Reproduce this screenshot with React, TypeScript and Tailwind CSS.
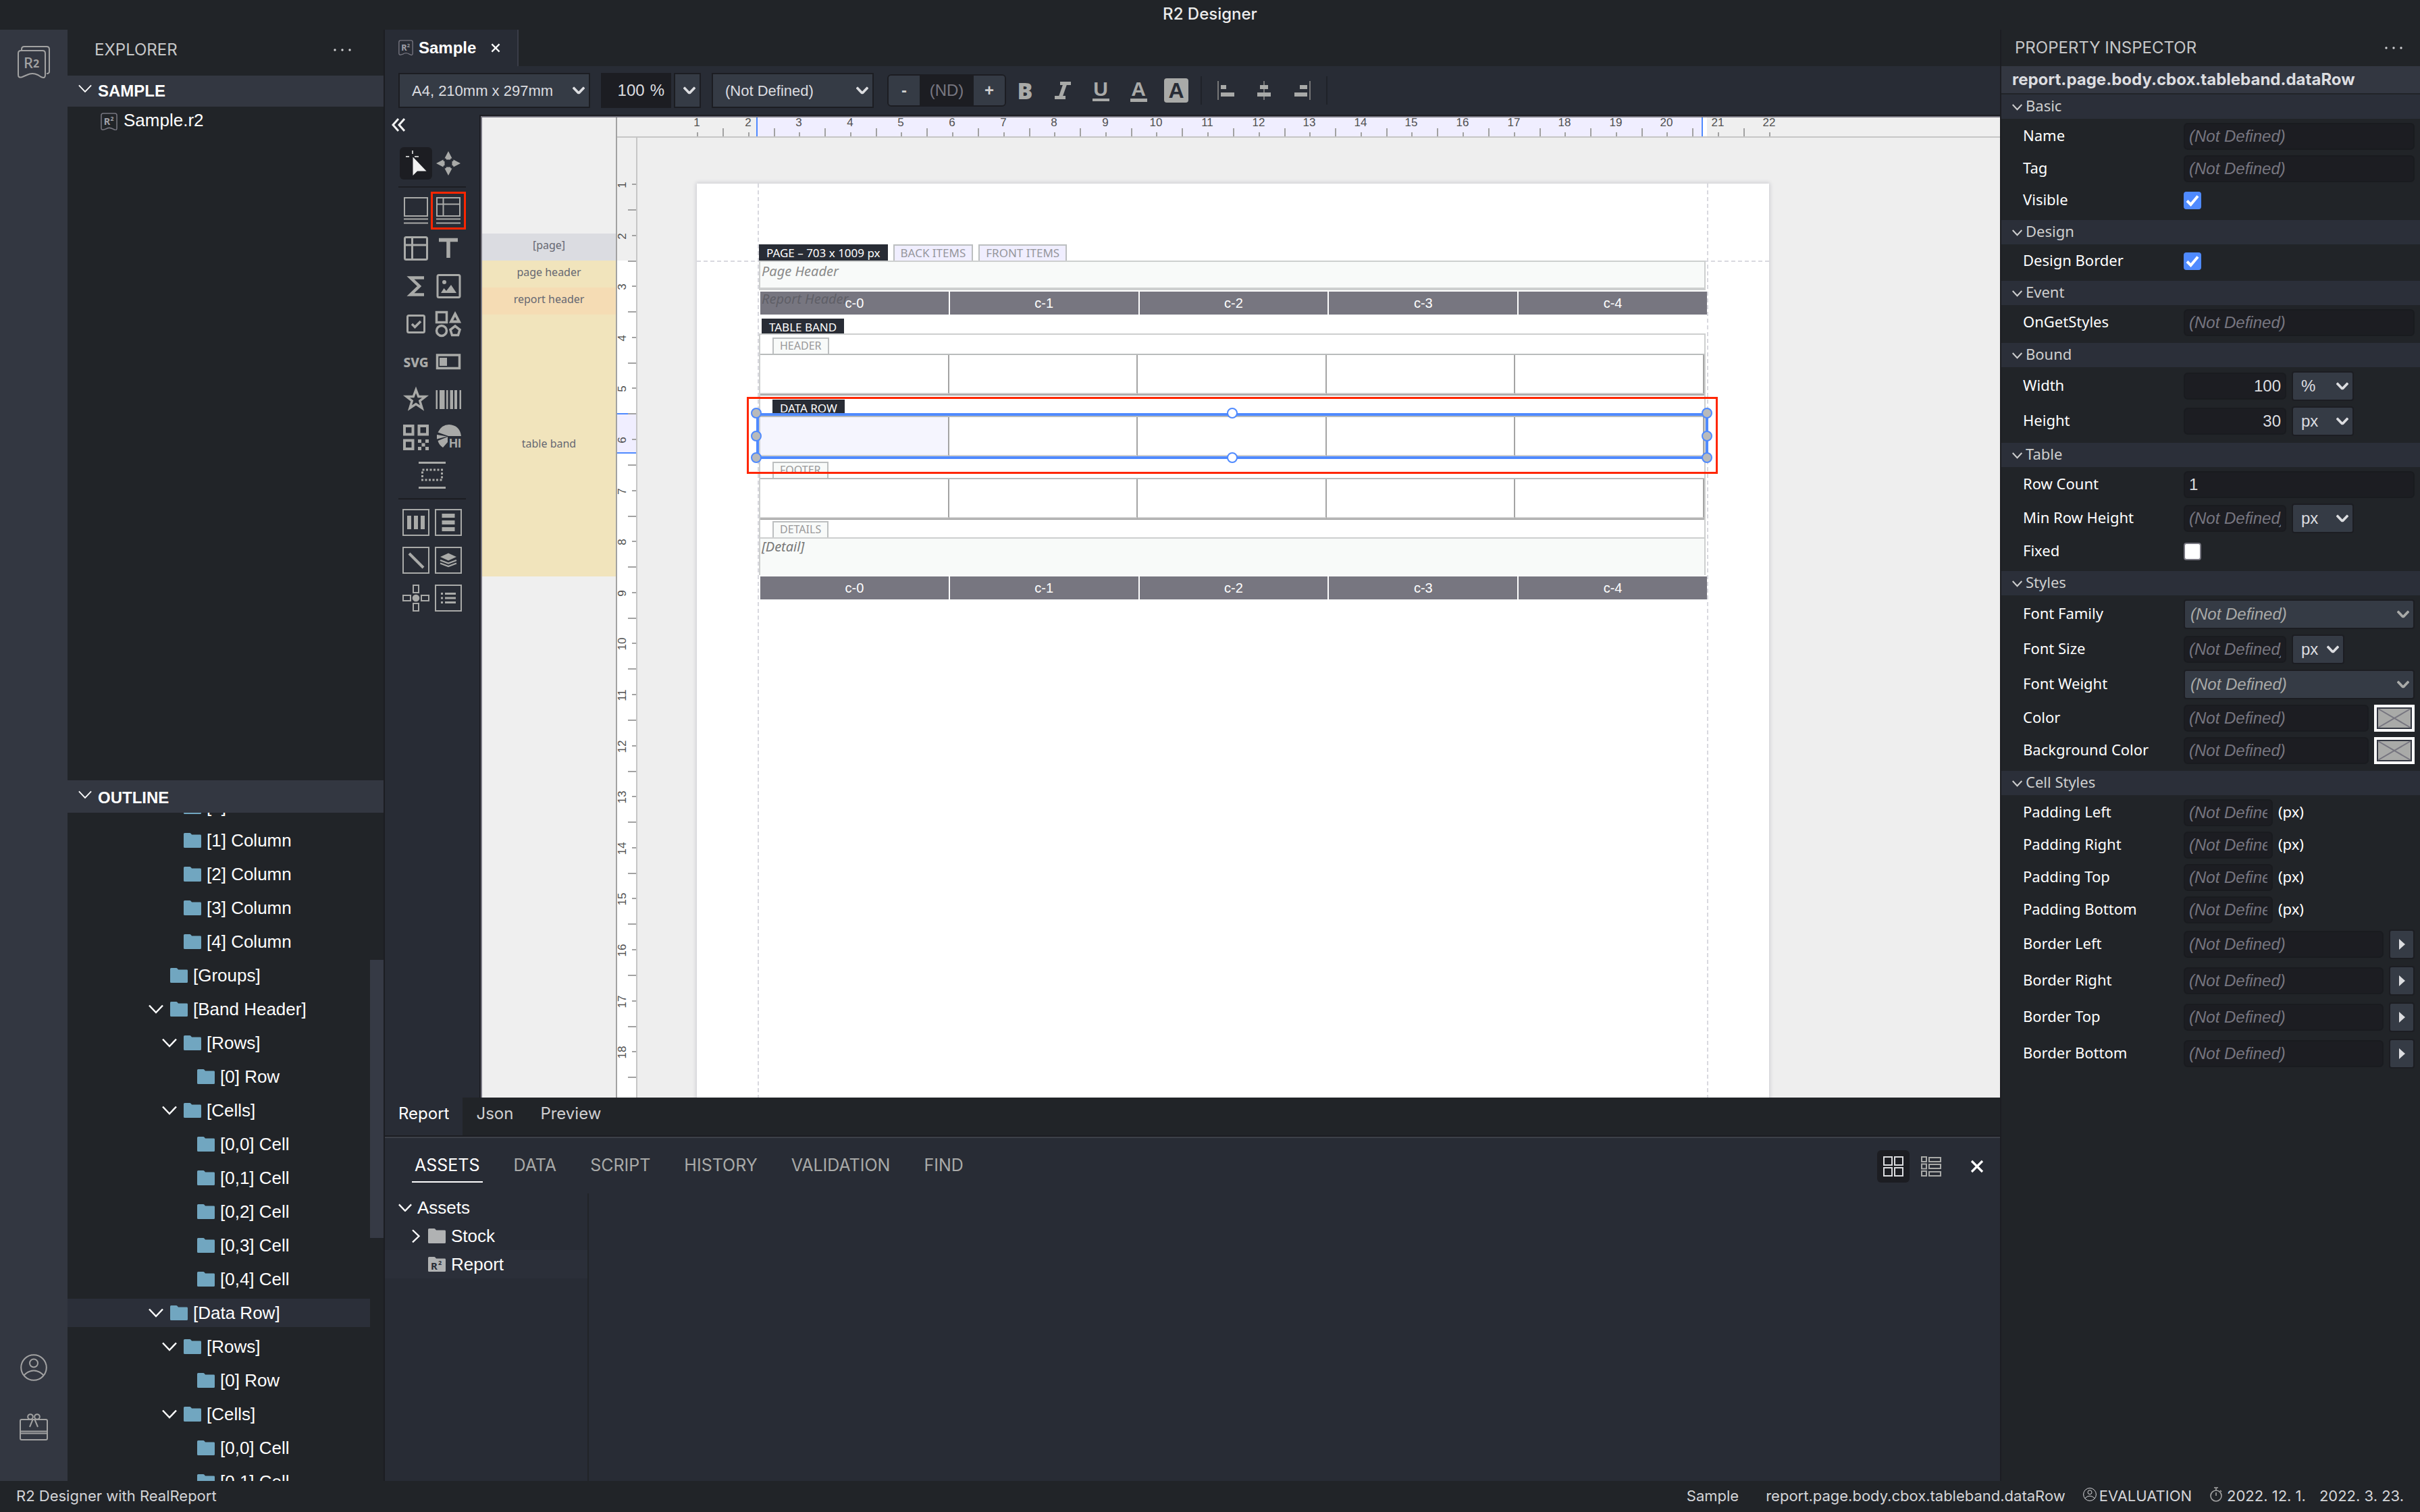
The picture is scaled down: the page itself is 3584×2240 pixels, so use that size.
import { useState, type ReactNode } from "react";

const ND = "(Not Defined)";

type TreeItem = { label: string; level: number; open?: boolean; selected?: boolean };

const outline: TreeItem[] = [
  { label: "[0] Column", level: 2 },
  { label: "[1] Column", level: 2 },
  { label: "[2] Column", level: 2 },
  { label: "[3] Column", level: 2 },
  { label: "[4] Column", level: 2 },
  { label: "[Groups]", level: 1 },
  { label: "[Band Header]", level: 1, open: true },
  { label: "[Rows]", level: 2, open: true },
  { label: "[0] Row", level: 3 },
  { label: "[Cells]", level: 2, open: true },
  { label: "[0,0] Cell", level: 3 },
  { label: "[0,1] Cell", level: 3 },
  { label: "[0,2] Cell", level: 3 },
  { label: "[0,3] Cell", level: 3 },
  { label: "[0,4] Cell", level: 3 },
  { label: "[Data Row]", level: 1, open: true, selected: true },
  { label: "[Rows]", level: 2, open: true },
  { label: "[0] Row", level: 3 },
  { label: "[Cells]", level: 2, open: true },
  { label: "[0,0] Cell", level: 3 },
  { label: "[0,1] Cell", level: 3 },
];

const indents: Record<number, string> = {
  1: "pl-[120px]",
  2: "pl-[140px]",
  3: "pl-[160px]",
};

const columns = ["c-0", "c-1", "c-2", "c-3", "c-4"];

/* ---------- icons ---------- */

const Chevron = ({ className = "", thick = 2 }: { className?: string; thick?: number }) => (
  <svg viewBox="0 0 22 14" className={className} fill="none" stroke="currentColor" strokeWidth={thick} aria-hidden>
    <path d="M1 1.5 11 12 21 1.5" />
  </svg>
);

const Folder = ({ className = "" }: { className?: string }) => (
  <svg viewBox="0 0 26 22" className={className} fill="currentColor" aria-hidden>
    <path d="M0 1.5Q0 0 1.5 0H9Q10 0 10.8 1L12 2.6H24.5Q26 2.6 26 4V20.5Q26 22 24.5 22H1.5Q0 22 0 20.5Z" />
  </svg>
);

const ReportFile = ({ className = "" }: { className?: string }) => (
  <svg viewBox="0 0 26 28" className={className} fill="none" stroke="#777680" strokeWidth="1.6" aria-hidden>
    <path d="M1 4Q1 1 4 1H22Q25 1 25 4V24Q25 27 22 26.500L19 25Q13 21.500 8 25Q1 28 1 24Z" />
    <text x="5" y="19" fill="#a0a0a8" stroke="none" fontSize="15" fontWeight="700" fontFamily="Noto Sans">R</text>
    <text x="15" y="13" fill="#a0a0a8" stroke="none" fontSize="9" fontWeight="700" fontFamily="Noto Sans">2</text>
  </svg>
);

const Dots = () => (
  <svg viewBox="0 0 26 4" className="h-1 w-[26px]" fill="#cfd0d2" aria-hidden>
    <circle cx="2" cy="2" r="1.7" />
    <circle cx="13" cy="2" r="1.7" />
    <circle cx="24" cy="2" r="1.7" />
  </svg>
);

const Cross = ({ className = "" }: { className?: string }) => (
  <svg viewBox="0 0 20 20" className={className} fill="none" stroke="currentColor" strokeWidth="3.2" aria-hidden>
    <path d="M2 2 18 18M18 2 2 18" />
  </svg>
);

const UserIcon = ({ className = "" }: { className?: string }) => (
  <svg viewBox="0 0 40 40" className={className} fill="none" stroke="currentColor" strokeWidth="2" aria-hidden>
    <circle cx="20" cy="20" r="18.800" />
    <circle cx="20" cy="13.500" r="6" />
    <path d="M5.500 31.500Q12 24.500 20 24.500T34.500 31.500" />
  </svg>
);

/* ---------- toolbox ---------- */

const tools: Record<string, ReactNode> = {
  Select: (
    <g>
      <path d="M-4.500-9.500V18L2 11.500H15.500Z" fill="#f2f2f2" stroke="none" />
      <path d="M-15-10H-10M-2-10H4M-5-19V-14" stroke="#c0c0c0" strokeWidth="2" />
    </g>
  ),
  Move: (
    <g fill="#a9aaa8" stroke="none">
      {[0, 90, 180, 270].map((a) => (
        <path key={a} transform={`rotate(${a})`} d="M0-18 5.500-7.500Q3-8 3-5.500H-3Q-3-8-5.500-7.500Z" />
      ))}
    </g>
  ),
  Band: <path d="M-17-19H17V8H-17ZM-18 12.500H18M-18 18.500H18" />,
  "Table Band": <path d="M-17-19H17V8H-17ZM-17-9.500H17M-7.500-19V8M-18 12.500H18M-18 18.500H18" />,
  Table: (
    <g strokeWidth="3">
      <rect x="-16.500" y="-16.500" width="33" height="33" rx="2" />
      <path d="M-16-5H16M-5.500-16V16" />
    </g>
  ),
  Text: <path d="M-14-12.500H14M0-12V14" strokeWidth="5.500" />,
  Summary: <path d="M12-12.500H-8L5 0-8 12.500H12" strokeWidth="4.500" />,
  Image: (
    <g>
      <rect x="-16" y="-16.500" width="33" height="33" rx="2" strokeWidth="3" />
      <circle cx="-6" cy="-6" r="3" fill="#a9aaa8" stroke="none" />
      <path d="M-11 10-6.500 3-3 7 4-2 12 10Z" fill="#a9aaa8" stroke="none" />
    </g>
  ),
  "Check Box": (
    <g strokeWidth="3">
      <rect x="-12.500" y="-12.500" width="25" height="25" rx="2" />
      <path d="M-6 0-1.500 4.500 7-4" strokeWidth="3.500" />
    </g>
  ),
  Shape: (
    <g strokeWidth="3.500">
      <rect x="-17.500" y="-17.500" width="15" height="15" />
      <path d="M10-15 16-3.500H4Z" strokeWidth="3.800" />
      <circle cx="-10" cy="10" r="7.500" />
      <path d="M10 3 17 8.500 14.500 16.500H5.500L3 8.500Z" />
    </g>
  ),
  SVG: (
    <text x="0" y="8" textAnchor="middle" fill="#a9aaa8" stroke="none" fontSize="19" fontWeight="800" fontFamily="Noto Sans">
      SVG
    </text>
  ),
  "Html View": (
    <g>
      <rect x="-16.500" y="-10" width="33" height="19.500" strokeWidth="3.500" />
      <rect x="-13" y="-6" width="11" height="12" fill="#a9aaa8" stroke="none" />
    </g>
  ),
  Star: <path d="M0-14.500 3.800-4.500H14L5.800 2 9 12.500 0 6.500-9 12.500-5.800 2-14-4.500H-3.800Z" strokeWidth="3.500" />,
  Barcode: (
    <path
      d="M-18.500-14H-16V14H-18.500ZM-13-14H-5.500V14H-13ZM-3-14H-.500V14H-3ZM2.500-14H7V14H2.500ZM9-14H13V14H9ZM16.500-14H19V14H16.500Z"
      fill="#a9aaa8"
      stroke="none"
    />
  ),
  "QR Code": (
    <g>
      <path d="M-17-17H-4.500V-4.500H-17ZM4.500-17H17V-4.500H4.500ZM-17 4.500H-4.500V17H-17Z" strokeWidth="4" />
      <path
        d="M3 3H8V8H3ZM14 3H19V8H14ZM8.500 8.500H13.500V13.500H8.500ZM3 14H8V19H3ZM14 14H19V19H14Z"
        fill="#a9aaa8"
        stroke="none"
      />
    </g>
  ),
  Chart: (
    <g fill="#a9aaa8" stroke="none">
      <path d="M-15.500-7.500Q-10-19 1-19 17-18 19-2H0ZM-17-4-2-1.500-17 2.500ZM-15.500 5-1-1V7L-8 15Q-14 11-15.500 5Z" />
      <text x="1" y="14.500" fontSize="18" fontWeight="700" fontFamily="Liberation Sans">HI</text>
    </g>
  ),
  Spacer: (
    <g strokeWidth="3">
      <path d="M-20-18.500H20M-20 18.500H20" />
      <rect x="-14.500" y="-8" width="29" height="15" strokeDasharray="3 2.500" />
    </g>
  ),
  "Column Box": (
    <g>
      <rect x="-19" y="-19" width="38" height="38" />
      <path d="M-10-10V10M0-10V10M10-10V10" strokeWidth="6" />
    </g>
  ),
  "Row Box": (
    <g>
      <rect x="-19" y="-19" width="38" height="38" />
      <path d="M-9.500-10H9.500M-9.500 0H9.500M-9.500 10H9.500" strokeWidth="6" />
    </g>
  ),
  "Bound Box": (
    <g>
      <rect x="-19" y="-19" width="38" height="38" />
      <path d="M-10-10 11 11" strokeWidth="4" />
    </g>
  ),
  "Stack Box": (
    <g>
      <rect x="-19" y="-19" width="38" height="38" />
      <path d="M0-10.500 12-5 0 .500-12-5Z" fill="#a9aaa8" stroke="none" />
      <path d="M-12 0 0 4.500 12 0M-12 4.500 0 9 12 4.500" strokeWidth="2.400" />
    </g>
  ),
  Layout: (
    <g>
      <path d="M-4-19H4V-8H-4ZM-4 8H4V19H-4ZM-19-4H-8V4H-19ZM8-4H19V4H8Z" />
      <circle r="5.300" fill="#a9aaa8" stroke="none" />
    </g>
  ),
  List: (
    <g>
      <rect x="-19" y="-19" width="38" height="38" />
      <path d="M-11-6.500H-8M-5-6.500H11M-11 0H-8M-5 0H11M-11 6.500H-8M-5 6.500H11" strokeWidth="3" />
    </g>
  ),
};

const toolGroups: string[][] = [
  ["Select", "Move"],
  ["Band", "Table Band", "Table", "Text", "Summary", "Image", "Check Box", "Shape", "SVG", "Html View", "Star", "Barcode", "QR Code", "Chart", "Spacer"],
  ["Column Box", "Row Box", "Bound Box", "Stack Box", "Layout", "List"],
];

const Tool = ({ name, active, onClick }: { name: string; active: boolean; onClick: () => void }) => (
  <button
    aria-label={name}
    onClick={onClick}
    className={`relative flex h-12 items-center justify-center rounded-md ${active ? "bg-[#1c1d22]" : ""} ${
      name === "Spacer" ? "col-span-2" : ""
    }`}
  >
    <svg viewBox="-20 -20 40 40" className="size-10" fill="none" stroke="#a9aaa8" strokeWidth="2">
      {tools[name]}
    </svg>
    {name === "Table Band" && <span className="absolute -inset-x-[2px] -inset-y-1 border-[3px] border-[#ff2600]" />}
  </button>
);

const Toolbox = () => {
  const [tool, setTool] = useState("Select");

  return (
    <div className="w-[140px] shrink-0 px-5">
      <button aria-label="Collapse toolbox" className="-ml-2.5 mt-[5px] block text-[#f2f2f2]">
        <svg viewBox="0 0 20 20" className="size-5" fill="none" stroke="currentColor" strokeWidth="3">
          <path d="M10 1 2 10 10 19M19 1 11 10 19 19" />
        </svg>
      </button>
      <div className="mt-[23px]">
        {toolGroups.map((group, i) => (
          <div key={i}>
            {i > 0 && <div className="my-[10px] h-[2px] bg-[#1c1d22]" />}
            <div className="mx-[2px] grid grid-cols-2 gap-y-2">
              {group.map((name) => (
                <Tool key={name} name={name} active={tool === name} onClick={() => setTool(name)} />
              ))}
            </div>
          </div>
        ))}
      </div>
    </div>
  );
};

/* ---------- form parts ---------- */

const Select = ({
  id,
  label,
  value,
  className = "",
  selectClass = "",
  chevronClass = "text-[#dcdde0]",
}: {
  id?: string;
  label?: string;
  value: string;
  className?: string;
  selectClass?: string;
  chevronClass?: string;
}) => (
  <div className={`relative ${className}`}>
    <select
      id={id}
      aria-label={label}
      className={`h-full w-full appearance-none border-2 border-[#1c1d22] bg-[#353b45] text-[#dcdde0] outline-none ${selectClass}`}
    >
      <option>{value}</option>
    </select>
    <Chevron thick={4.5} className={`pointer-events-none absolute right-2 top-1/2 w-[18px] -translate-y-1/2 ${chevronClass}`} />
  </div>
);

const Toolbar = () => (
  <div className="flex h-[72px] shrink-0 items-center bg-[#282c35] pl-5 text-[22px]">
    <Select label="Paper size" value="A4, 210mm x 297mm" className="h-[52px] w-[284px]" selectClass="pl-[18px]" />
    <div className="ml-4 flex h-[52px] w-[104px] items-center justify-end bg-[#1c1d22] pr-[10px] text-[24px] text-[#dcdde0]">
      <input aria-label="Zoom" defaultValue="100" className="mr-2 w-[56px] bg-transparent text-right outline-none" />%
    </div>
    <Select label="Zoom level" value="" className="ml-1 h-[52px] w-10" />
    <Select label="Font" value={ND} className="ml-4 h-[52px] w-[240px]" selectClass="pl-[18px]" />
    <div className="ml-5 flex h-12 w-[176px] overflow-hidden rounded-md border-2 border-[#1c1d22] text-[24px]">
      <button className="w-[46px] bg-[#353b45] font-bold text-[#cfcfcf]">-</button>
      <input
        aria-label="Font size"
        placeholder="(ND)"
        className="w-20 bg-[#1c1d22] text-center outline-none placeholder:text-[#777680]"
      />
      <button className="w-[46px] bg-[#353b45] font-bold text-[#cfcfcf]">+</button>
    </div>
    <div className="flex h-[42px] items-center border-r-2 border-[#1f2229] pr-2 text-[32px] font-bold leading-none text-[#a9aaa8]">
      <button className="w-14 font-[Noto_Sans] text-[34px] font-black">B</button>
      <button aria-label="Italic" className="flex w-14 justify-center">
        <svg viewBox="0 0 24 26" className="h-[26px] w-6" fill="none" stroke="currentColor">
          <path d="M8 2.500H24M0 23.500H16" strokeWidth="5" />
          <path d="M15.500 3 8.500 23" strokeWidth="5.500" />
        </svg>
      </button>
      <button className="flex w-14 justify-center">
        <span className="w-[25px] border-b-4 border-current text-[30px] leading-[28px]">U</span>
      </button>
      <button className="flex w-14 justify-center">
        <span className="w-[25px] border-b-[5px] border-current text-[30px] leading-[28px]">A</span>
      </button>
      <button className="flex w-14 justify-center">
        <span className="size-9 rounded bg-[#a9aaa8] leading-9 text-[#282c35]">A</span>
      </button>
    </div>
    <div className="flex h-[42px] items-center border-r-2 border-[#1f2229] px-2">
      {[
        { name: "Align left", d: "M-12-14V14", boxes: "M-8-8H0V-2H-8ZM-8 3H12V9H-8Z" },
        { name: "Align center", d: "M0-14V14", boxes: "M-6-8H6V-2H-6ZM-10 3H10V9H-10Z" },
        { name: "Align right", d: "M12-14V14", boxes: "M-3-8H8V-2H-3ZM-11 3H8V9H-11Z" },
      ].map((a) => (
        <button key={a.name} aria-label={a.name} className="flex w-14 justify-center">
          <svg viewBox="-14 -14 28 28" className="size-7" fill="#a9aaa8" stroke="#777">
            <path d={a.d} strokeWidth="2" />
            <path d={a.boxes} stroke="none" />
          </svg>
        </button>
      ))}
    </div>
  </div>
);

/* ---------- rulers ---------- */

const STEP = 75.6; // one centimetre at double density

const marks = (count: number) => Array.from({ length: count }, (_, i) => i + 1);

const HorizontalRuler = () => (
  <svg className="block h-[30px] w-full bg-[#efefef]" fontFamily="Liberation Sans" fontSize="17" fill="#4f4f4f">
    <rect x="206" width="1402" height="30" fill="#f0eeff" />
    <rect x="1608" width="6" height="30" fill="#fff" />
    <path d="M207 0V28M1607 0V28" stroke="#4f8aff" strokeWidth="2" />
    <rect y="28" width="100%" height="2" fill="#c6c6c6" />
    {marks(22).map((n) => {
      const x = Math.round(119 + (n - 1) * STEP);
      return (
        <g key={n}>
          <text x={x - 1} y="13" textAnchor="middle">{n}</text>
          <rect x={x - 1} y="22" width="2" height="6" fill="#a2a2a2" />
          {n < 22 && <rect x={x + 37} y="16" width="2" height="12" fill="#a2a2a2" />}
        </g>
      );
    })}
  </svg>
);

const VerticalRuler = () => (
  <svg className="block h-full w-[30px] shrink-0 bg-white" fontFamily="Liberation Sans" fontSize="17" fill="#4f4f4f">
    <rect width="30" height="182" fill="#efefef" />
    <rect y="408" width="30" height="60" fill="#f0eeff" />
    <path d="M0 409H28M0 467H28" stroke="#4f8aff" strokeWidth="2" />
    <rect x="28" width="2" height="100%" fill="#c6c6c6" />
    {marks(19).map((n) => {
      const y = Math.round(69 + (n - 1) * STEP);
      return (
        <g key={n}>
          <text transform={`translate(13 ${y + 1}) rotate(-90)`} textAnchor="middle">{n}</text>
          <rect x="22" y={y - 1} width="6" height="2" fill="#a2a2a2" />
          <rect x="16" y={y + 37} width="12" height="2" fill="#a2a2a2" />
        </g>
      );
    })}
  </svg>
);

/* ---------- report page ---------- */

const Tag = ({ children, tone = "plain" }: { children: ReactNode; tone?: "plain" | "dark" | "violet" }) => (
  <span
    className={`flex h-6 w-fit items-center border-2 border-b-0 px-[9px] pb-[2px] leading-none ${
      tone === "dark"
        ? "border-[#282c35] bg-[#282c35] text-[17px] text-white"
        : tone === "violet"
          ? "border-[#bcbfc0] bg-[#f0eeff] text-[17px] text-[#96969c]"
          : "border-[#bcbfc0] bg-[#f8faf9] text-[16px] text-[#999]"
    }`}
  >
    {children}
  </span>
);

const ColumnBar = ({ ghost }: { ghost?: string }) => (
  <div className="relative ml-[2px] flex h-[34px] gap-[2px] font-[Liberation_Sans] text-[20px] text-white">
    {columns.map((c) => (
      <div key={c} className="flex flex-1 items-center justify-center bg-[#777680]">{c}</div>
    ))}
    {ghost && (
      <span className="absolute left-[2px] -top-[4px] font-[Noto_Sans] italic text-[#5f5f67]">{ghost}</span>
    )}
  </div>
);

const BandRow = ({ selected = false }: { selected?: boolean }) => (
  <div className="relative flex h-[62px] border-y-2 border-t-[#b9bcbc] border-b-[#a4a4a4]">
    {columns.map((c, i) => (
      <div
        key={c}
        className={`flex-1 border-b-2 border-r-2 border-b-[#d0d0d0] border-r-[#a4a4a4] ${selected && i === 0 ? "bg-[#f5f5fe]" : "bg-white"}`}
      />
    ))}
    {selected && <Selection />}
  </div>
);

const handle = "absolute size-4 rounded-full border-2 border-[#4f8aff]";

/* Resize frame of the selected row and the callout round it */
const Selection = () => (
  <>
    <div className="absolute -inset-x-[6px] -top-[6px] -bottom-1 border-4 border-[#4f8aff]">
      <span className={`${handle} -left-3 -top-3 bg-[#b8babb]`} />
      <span className={`${handle} -left-3 top-1/2 -translate-y-1/2 bg-[#b8babb]`} />
      <span className={`${handle} -left-3 -bottom-[10px] bg-[#b8babb]`} />
      <span className={`${handle} -top-3 left-1/2 -translate-x-1/2 bg-white`} />
      <span className={`${handle} -bottom-[10px] left-1/2 -translate-x-1/2 bg-white`} />
      <span className={`${handle} -right-[10px] -top-3 bg-[#b8babb]`} />
      <span className={`${handle} -right-[10px] top-1/2 -translate-y-1/2 bg-[#b8babb]`} />
      <span className={`${handle} -right-[10px] -bottom-[10px] bg-[#b8babb]`} />
    </div>
    <div className="absolute -inset-x-[20px] -top-[30px] -bottom-[26px] z-10 border-[3px] border-[#ff2600]" />
  </>
);

const ReportPage = () => (
  <div className="relative h-[2246px] w-[1588px] bg-white px-[92px] pt-[90px] font-[Noto_Sans] shadow-[0_0_6px_1px_rgba(60,60,90,0.2)]">
    <div className="absolute inset-y-0 left-[90px] right-[90px] border-x-2 border-dashed border-[#d9d9df]" />
    <div className="absolute inset-x-0 top-[114px] border-t-2 border-dashed border-[#d9d9df]" />

    <div className="relative">
      <div className="flex gap-2">
        <Tag tone="dark">PAGE – 703 x 1009 px</Tag>
        <Tag tone="violet">BACK ITEMS</Tag>
        <Tag tone="violet">FRONT ITEMS</Tag>
      </div>
      <div className="mr-[2px] h-11 border-2 border-b-4 border-[#cdcfcf] bg-[#f8faf9] pl-[2px] text-[20px] italic leading-7 text-[#8a8a8a]">
        Page Header
      </div>
      <div className="mt-[2px]">
        <ColumnBar ghost="Report Header" />
      </div>

      <div className="ml-1 mt-1.5">
        <Tag tone="dark">TABLE BAND</Tag>
      </div>
      <div className="-mt-[2px] mr-[2px] border-2 border-b-0 border-[#cdcfcf]">
        <div className="pl-[18px] pt-1"><Tag>HEADER</Tag></div>
        <BandRow />
        <div className="pl-[18px] pt-1.5"><Tag tone="dark">DATA ROW</Tag></div>
        <BandRow selected />
        <div className="pl-[18px] pt-1.5"><Tag>FOOTER</Tag></div>
        <BandRow />
        <div className="pl-[18px] pt-[2px]"><Tag>DETAILS</Tag></div>
        <div className="h-14 border-t-2 border-[#cdcfcf] bg-[#f8faf9] pl-[2px] text-[20px] italic leading-6 text-[#777]">
          [Detail]
        </div>
      </div>
      <div className="mt-[2px]">
        <ColumnBar />
      </div>
    </div>
  </div>
);

const Designer = () => (
  <div className="flex min-w-0 flex-1 border-l-2 border-t-2 border-[#1c1d22]">
    <div className="flex min-w-0 flex-1 border-l-2 border-t-2 border-[#777680]">
      <div className="w-[200px] shrink-0 border-r-2 border-[#a2a2a2] bg-[#efefef] pt-[172px] text-center font-[Noto_Sans] text-[16px] text-[#666872]">
        <div className="h-10 bg-[#dbdce1] leading-[34px]">[page]</div>
        <div className="h-10 bg-[#f1e4bc] leading-[34px]">page header</div>
        <div className="h-10 bg-[#f5dcb4] leading-[34px]">report header</div>
        <div className="h-[388px] bg-[#f1e4bc] leading-[382px]">table band</div>
      </div>
      <div className="flex min-w-0 flex-1 flex-col">
        <HorizontalRuler />
        <div className="flex min-h-0 flex-1">
          <VerticalRuler />
          <div className="min-w-0 flex-1 overflow-hidden bg-[#eee] pl-[88px] pt-[68px]">
            <ReportPage />
          </div>
        </div>
      </div>
    </div>
  </div>
);

/* ---------- side panels ---------- */

const ActivityBar = () => (
  <nav className="flex w-[100px] shrink-0 flex-col items-center bg-[#333741] text-[#a2a2a2]">
    <button aria-label="Reports" className="mt-6">
      <svg viewBox="0 0 48 48" className="size-12" fill="none" stroke="currentColor" strokeWidth="2">
        <path d="M6 7V5Q6 1 10 1H43Q47 1 47 5V38Q47 41 43 41" />
        <path d="M1 11Q1 7 5 7H37Q41 7 41 11V43Q41 49 35 46L30 43Q22 39 14 43L7 46Q1 48 1 43Z" />
        <text x="9" y="33" fill="currentColor" stroke="none" fontSize="22" fontFamily="Noto Sans" fontWeight="500">R</text>
        <text x="23" y="32" fill="currentColor" stroke="none" fontSize="16" fontFamily="Noto Sans" fontWeight="700">2</text>
      </svg>
    </button>
    <button aria-label="Account" className="mt-auto">
      <UserIcon className="size-10" />
    </button>
    <button aria-label="Gift" className="mb-[60px] mt-12">
      <svg viewBox="0 0 42 40" className="h-10 w-[42px]" fill="none" stroke="currentColor" strokeWidth="2">
        <rect x="1" y="9" width="40" height="30" rx="2" />
        <path d="M1 26.500H41M1 29.500H41M20 8 15 20M22 8 27 20" />
        <circle cx="16" cy="5" r="3.800" />
        <circle cx="26" cy="5" r="3.800" />
      </svg>
    </button>
  </nav>
);

const PanelHeader = ({ title, className }: { title: string; className: string }) => (
  <button className={`flex w-full shrink-0 items-center bg-[#333741] pl-4 text-[24px] font-bold text-white ${className}`}>
    <Chevron className="mb-2 mr-[9px] w-5" />
    {title}
  </button>
);

const Sidebar = () => (
  <aside className="flex w-[470px] shrink-0 flex-col border-r-2 border-[#1c1d22] text-white">
    <div className="flex h-[68px] shrink-0 items-center justify-between pb-2 pl-10 pr-12 font-[Inter] text-[24px] text-[#c6c7c8]">
      <h2>EXPLORER</h2>
      <button aria-label="Explorer menu"><Dots /></button>
    </div>
    <PanelHeader title="SAMPLE" className="h-[46px]" />
    <div className="h-[998px] shrink-0">
      <a href="#sample" className="flex h-10 items-center pl-[49px] text-[26px]">
        <ReportFile className="mr-[9px] mt-1 w-[25px]" />
        Sample.r2
      </a>
    </div>
    <PanelHeader title="OUTLINE" className="h-12 pt-[3px]" />
    <div className="relative min-h-0 flex-1 overflow-hidden">
      <ul className="-mt-[30px] mr-5 flex flex-col gap-2 text-[26px]">
        {outline.map((item, i) => (
          <li key={i} className={`flex h-[42px] shrink-0 items-center ${indents[item.level]} ${item.selected ? "bg-[#2b2f39]" : ""}`}>
            <span className="mr-2.5 w-[22px]">{item.open && <Chevron className="w-[22px]" thick={2.5} />}</span>
            <Folder className="mr-2 w-[26px] shrink-0 text-[#71a6c0]" />
            {item.label}
          </li>
        ))}
      </ul>
      <div className="absolute right-0 top-[218px] h-[412px] w-5 bg-[#363a45]" />
    </div>
  </aside>
);

const Bottom = () => {
  const [view, setView] = useState("ASSETS");

  return (
    <section className="flex h-[510px] shrink-0 flex-col border-t-2 border-[#3d4149] bg-[#282c35]">
      <div className="flex h-[82px] shrink-0 items-center pl-10 pr-6 pt-[2px] font-[Inter] text-[25px] text-[#a9aaa8]">
        <div className="flex gap-[42px]">
          {["ASSETS", "DATA", "SCRIPT", "HISTORY", "VALIDATION", "FIND"].map((name) => (
            <button
              key={name}
              onClick={() => setView(name)}
              className={`h-[48px] border-b-2 px-1 ${view === name ? "border-white text-white" : "border-transparent"}`}
            >
              {name}
            </button>
          ))}
        </div>
        <button aria-label="Grid view" className="ml-auto flex size-12 items-center justify-center rounded-md bg-[#1c1d22]">
          <svg viewBox="0 0 30 30" className="size-[30px]" fill="none" stroke="#dcdde0" strokeWidth="2">
            <path d="M1 1H13V13H1ZM17 1H29V13H17ZM1 17H13V29H1ZM17 17H29V29H17Z" />
          </svg>
        </button>
        <button aria-label="List view" className="ml-2 flex size-12 items-center justify-center">
          <svg viewBox="0 0 30 30" className="size-[30px]" fill="none" stroke="#a9aaa8" strokeWidth="2">
            <path d="M1 1H8V8H1ZM12 2H29V8H12ZM1 11.500H8V18.500H1ZM12 12H29V18H12ZM1 22H8V29H1ZM12 23H29V29H12Z" />
          </svg>
        </button>
        <button aria-label="Close panel" className="ml-[34px] text-white">
          <Cross className="size-5" />
        </button>
      </div>
      <ul className="w-[302px] flex-1 border-r-2 border-[#212428] text-[26px] text-white">
        <li className="flex h-[42px] items-center pl-5">
          <Chevron className="mr-2 w-5" thick={2.5} />
          Assets
        </li>
        <li className="flex h-[42px] items-center pl-9">
          <Chevron className="mr-2 w-5 -rotate-90" thick={2.5} />
          <Folder className="mr-2 w-[26px] text-[#b0b2b3]" />
          Stock
        </li>
        <li className="flex h-[42px] items-center bg-[#2b2f39] pl-16">
          <span className="relative mr-2">
            <Folder className="w-[26px] text-[#b0b2b3]" />
            <span className="absolute left-1 top-[3px] font-[Noto_Sans] text-[15px] font-bold leading-5 text-[#282c35]">R</span>
            <span className="absolute left-[15px] top-[3px] font-[Noto_Sans] text-[9px] font-bold leading-3 text-[#282c35]">2</span>
          </span>
          Report
        </li>
      </ul>
    </section>
  );
};

const Editor = () => (
  <main className="flex min-w-0 flex-1 flex-col">
    <div className="flex h-[54px] shrink-0">
      <div className="flex w-[198px] items-center border-r-2 border-[#3a3d48] bg-[#282c35] pl-5 text-[24px] font-bold text-white">
        <ReportFile className="mr-2 w-[22px]" />
        Sample
        <button aria-label="Close tab" className="ml-[22px]"><Cross className="size-[14px]" /></button>
      </div>
    </div>
    <Toolbar />
    <div className="flex min-h-0 flex-1 bg-[#282c35]">
      <Toolbox />
      <Designer />
    </div>
    <div className="flex h-[58px] shrink-0 border-b-2 border-[#1c1d22] font-[Inter] text-[24px] text-[#cfcfd1]">
      <button className="bg-[#282c35] px-5 pb-2 text-white">Report</button>
      <button className="px-5 pb-2">Json</button>
      <button className="px-5 pb-2">Preview</button>
    </div>
    <Bottom />
  </main>
);

/* ---------- property inspector ---------- */

type Kind = "text" | "check" | "unit" | "select" | "color" | "pad" | "border";
type Prop = { label: string; kind: Kind; value?: string; unit?: string; checked?: boolean; small?: boolean };

const sections: { title: string; props: Prop[] }[] = [
  {
    title: "Basic",
    props: [
      { label: "Name", kind: "text" },
      { label: "Tag", kind: "text" },
      { label: "Visible", kind: "check", checked: true },
    ],
  },
  { title: "Design", props: [{ label: "Design Border", kind: "check", checked: true }] },
  { title: "Event", props: [{ label: "OnGetStyles", kind: "text" }] },
  {
    title: "Bound",
    props: [
      { label: "Width", kind: "unit", value: "100", unit: "%" },
      { label: "Height", kind: "unit", value: "30", unit: "px" },
    ],
  },
  {
    title: "Table",
    props: [
      { label: "Row Count", kind: "text", value: "1" },
      { label: "Min Row Height", kind: "unit", unit: "px" },
      { label: "Fixed", kind: "check" },
    ],
  },
  {
    title: "Styles",
    props: [
      { label: "Font Family", kind: "select" },
      { label: "Font Size", kind: "unit", unit: "px", small: true },
      { label: "Font Weight", kind: "select" },
      { label: "Color", kind: "color" },
      { label: "Background Color", kind: "color" },
    ],
  },
  {
    title: "Cell Styles",
    props: [
      { label: "Padding Left", kind: "pad" },
      { label: "Padding Right", kind: "pad" },
      { label: "Padding Top", kind: "pad" },
      { label: "Padding Bottom", kind: "pad" },
      { label: "Border Left", kind: "border" },
      { label: "Border Right", kind: "border" },
      { label: "Border Top", kind: "border" },
      { label: "Border Bottom", kind: "border" },
    ],
  },
];

const rowHeights: Record<Kind, string> = {
  text: "h-12",
  color: "h-12",
  pad: "h-12",
  check: "h-[46px]",
  unit: "h-[52px]",
  select: "h-[52px]",
  border: "h-[54px]",
};

const field =
  "h-10 min-w-0 rounded-md border-2 border-[#191b1f] bg-[#1c1d22] px-1.5 font-[Liberation_Sans] text-[24px] text-[#dcdde0] outline-none placeholder:italic placeholder:text-[#777680]";

const PropEditor = ({ id, prop }: { id: string; prop: Prop }) => {
  switch (prop.kind) {
    case "check":
      return (
        <span className="relative flex size-[26px]">
          <input
            id={id}
            type="checkbox"
            defaultChecked={prop.checked}
            className="peer size-[26px] appearance-none rounded border-2 border-[#777680] bg-white checked:border-[#4f8aff] checked:bg-[#4f8aff]"
          />
          <svg viewBox="0 0 26 26" className="pointer-events-none absolute inset-0 hidden peer-checked:block" fill="none" stroke="#fff" strokeWidth="4">
            <path d="M5 13.500 10.500 19 21 6.500" />
          </svg>
        </span>
      );
    case "unit":
      return (
        <>
          <input id={id} defaultValue={prop.value} placeholder={ND} className={`${field} w-[152px] ${prop.value ? "text-right" : ""}`} />
          <Select
            label={`${prop.label} unit`}
            value={prop.unit ?? "px"}
            className={`h-11 font-[Liberation_Sans] text-[24px] ${prop.small ? "w-[78px]" : "w-[92px]"}`}
            selectClass="rounded pl-3"
          />
        </>
      );
    case "select":
      return (
        <Select
          id={id}
          value={ND}
          className="h-11 flex-1 font-[Liberation_Sans] text-[24px] italic"
          selectClass="rounded pl-2 !text-[#a9aaa8]"
          chevronClass="text-[#a9aaa8]"
        />
      );
    case "color":
      return (
        <>
          <input id={id} placeholder={ND} className={`${field} flex-1`} />
          <button aria-label={`Pick ${prop.label}`} className="h-10 w-[60px] bg-white p-1">
            <svg viewBox="0 0 52 32" className="block h-8 w-[52px]" fill="#a9aaa8" stroke="#333741">
              <rect x="1" y="1" width="50" height="30" strokeWidth="2" />
              <path d="M2 2 50 30M50 2 2 30" stroke="#777680" strokeWidth="2" />
            </svg>
          </button>
        </>
      );
    case "pad":
      return (
        <>
          <input id={id} placeholder={ND} className={`${field} w-[132px]`} />
          <span className="pb-1">(px)</span>
        </>
      );
    case "border":
      return (
        <>
          <input id={id} placeholder={ND} className={`${field} flex-1`} />
          <button aria-label={`Edit ${prop.label}`} className="flex h-11 w-[38px] items-center justify-center rounded border-2 border-[#1c1d22] bg-[#353b45]">
            <svg viewBox="0 0 9 16" className="h-4 w-[9px]" fill="#dcdde0">
              <path d="M0 0 9 8 0 16Z" />
            </svg>
          </button>
        </>
      );
    default:
      return <input id={id} defaultValue={prop.value} placeholder={ND} className={`${field} flex-1`} />;
  }
};

const Inspector = () => (
  <aside className="w-[622px] shrink-0 border-l-2 border-[#1c1d22] font-[Noto_Sans] text-[22px] text-white">
    <div className="flex h-[54px] items-center justify-between pl-5 pr-[26px] font-[Inter] text-[24px] text-[#c6c7c8]">
      <h2>PROPERTY INSPECTOR</h2>
      <button aria-label="Inspector menu"><Dots /></button>
    </div>
    <div className="h-10 bg-[#333741] pl-4 font-[Inter] text-[24px] font-bold leading-10 text-[#dcdde0]">
      report.page.body.cbox.tableband.dataRow
    </div>
    <div className="pt-[2px]">
      {sections.map((section) => (
        <section key={section.title}>
          <h3 className="flex h-9 items-center bg-[#2b2f39] pb-1 pl-4 text-[#cfcfcf]">
            <Chevron className="mr-[5px] mt-1.5 w-[15px]" thick={3} />
            {section.title}
          </h3>
          <div className="pb-1.5 pt-[2px]">
            {section.props.map((prop) => {
              const id = prop.label.toLowerCase().replaceAll(" ", "-");
              return (
                <div key={id} className={`flex items-center gap-2 pl-8 pr-2 ${rowHeights[prop.kind]}`}>
                  <label htmlFor={id} className="w-[230px] shrink-0 pb-1">{prop.label}</label>
                  <PropEditor id={id} prop={prop} />
                </div>
              );
            })}
          </div>
        </section>
      ))}
    </div>
  </aside>
);

const StatusBar = () => (
  <footer className="flex h-[46px] shrink-0 items-center px-6 pb-[2px] font-[Inter] text-[22px] text-[#d4d5d8]">
    <span className="mr-auto">R2 Designer with RealReport</span>
    <span>Sample</span>
    <span className="ml-10">report.page.body.cbox.tableband.dataRow</span>
    <UserIcon className="mb-1 ml-[26px] mr-1 w-5" />
    <span>EVALUATION</span>
    <svg viewBox="0 0 20 22" className="mb-1 ml-[26px] mr-1.5 h-[22px] w-5" fill="none" stroke="#a2a2a2" strokeWidth="1.6">
      <circle cx="10" cy="13" r="8" />
      <path d="M7 1H13M10 1V5M10 8V13M16 5 18 7" />
    </svg>
    <span>2022. 12. 1.</span>
    <span className="ml-5">2022. 3. 23.</span>
  </footer>
);

const App = () => (
  <div className="flex h-screen flex-col overflow-hidden bg-[#212428] font-[Liberation_Sans]">
    <header className="h-11 shrink-0 text-center font-[Inter] text-[24px] font-medium leading-[42px] text-[#ececec]">
      R2 Designer
    </header>
    <div className="flex min-h-0 flex-1">
      <ActivityBar />
      <Sidebar />
      <Editor />
      <Inspector />
    </div>
    <StatusBar />
  </div>
);

export default App;
